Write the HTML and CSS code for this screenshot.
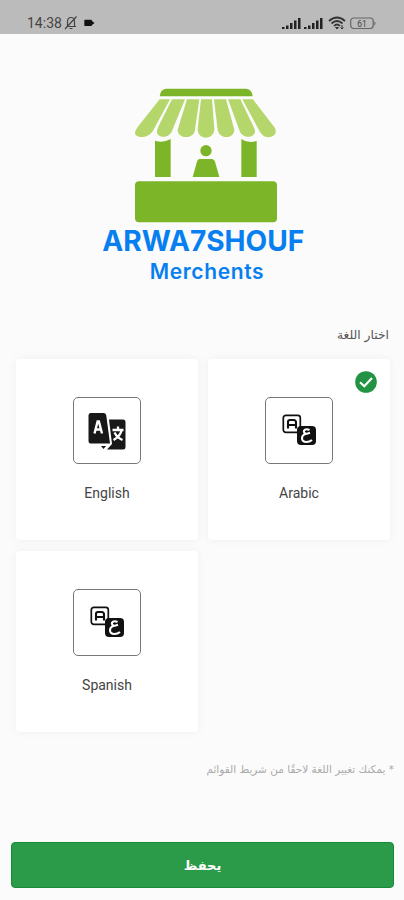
FILE: index.html
```html
<!DOCTYPE html>
<html lang="ar">
<head>
<meta charset="utf-8">
<title>Arwa7shouf Merchents</title>
<link rel="stylesheet" href="styles.css">
</head>
<body>
<svg class="defs" width="0" height="0">
  <symbol id="arabic" viewBox="0 0 36 36">
    <rect x="2.300" y="2.300" width="17" height="17" rx="2.500" fill="#fff" stroke="#111" stroke-width="1.700"/>
    <path d="M7 15.500V9Q7 7 9 7H12.500Q15 7 15 9.500V15.500M7 12H15" fill="none" stroke="#111" stroke-width="2.100"/>
    <rect x="16" y="13" width="19" height="19" rx="4" fill="#111"/>
    <path d="M28.500 17C24.500 15 21.500 17.500 23.500 20C24.500 21.200 26.500 20.800 29 19.800M25.500 20.800C19.500 22 19.500 29 25.500 29Q28.500 29 31 27" fill="none" stroke="#fff" stroke-width="2.100"/>
  </symbol>
</svg>
<div class="screen">
  <header class="status">
    <div class="group">
      <span class="time">14:38</span>
      <svg class="bell" width="14" height="16" viewBox="0 0 14 16" fill="none" stroke="#444" stroke-width="1.200"><path d="M2.500 11.500H12M3.500 11V6.500Q3.500 2.500 7 2.500T10.500 6.500V11M5.500 13.500H8.500M1 14L12.500 1.500"/></svg>
      <svg class="cam" width="11" height="8" viewBox="0 0 11 8"><path d="M1 .8H7Q8 .8 8 2L10.500 4L8 6Q8 7 7 7H1Q.3 7 .3 6V2Q.3 .8 1 .8Z" fill="#111"/></svg>
    </div>
    <div class="group signals">
      <svg width="19" height="13" viewBox="0 0 19 13" fill="#222"><path d="M0 10h2.500v2H0zM4 8.500h2.500V12H4zM8 6h2.500v6H8zM12 3.500h2.500V12H12zM16 1h2.500v11H16z"/></svg>
      <svg width="19" height="13" viewBox="0 0 19 13" fill="#222"><path d="M0 10h2.500v2H0zM4 8.500h2.500V12H4zM8 6h2.500v6H8zM12 3.500h2.500V12H12zM16 1h2.500v11H16z"/></svg>
      <svg class="wifi" width="18" height="14" viewBox="0 0 18 14" fill="none" stroke="#333" stroke-width="1.700"><path d="M1 5Q9-2 17 5M3.500 7.500Q9 2.500 14.500 7.500M6 10Q9 7 12 10"/><path d="M7.500 11.500L9 13L10.500 11.500ZM14 9V13M12.500 11.500L14 13L15.500 11.500" stroke-width="1"/></svg>
      <svg width="27" height="13" viewBox="0 0 27 13"><rect x=".7" y="1" width="22.500" height="10.500" rx="3" fill="none" stroke="#666" stroke-width="1.200"/><path d="M24.500 4Q26.500 6.300 24.500 8.500Z" fill="#555"/><text x="12" y="9.600" text-anchor="middle" class="battery">61</text></svg>
    </div>
  </header>
  <svg class="logo" width="230" height="220" viewBox="0 0 690 660">
    <path d="M228 41H469Q486 43 488 64H209Q211 43 228 41Z" fill="#7cb527"/>
    <g fill="#b4d66b">
      <path d="M209 73H240L189 167C176 190 137 192 135 175Q135 166 146 152Z"/>
      <path d="M246 73H285L246 168C236 192 203 189 201 172Q200 166 206 153Z"/>
      <path d="M291 73H328L315 164C312 194 263 193 263 164Z"/>
      <path d="M333 73H366L373 162C372 196 323 197 323 162Z"/>
      <path d="M372 73H408L433 164C432 193 388 194 383 164Z"/>
      <path d="M414 73H451L492 158C507 188 459 196 449 168Z"/>
      <path d="M457 73H489L551 154C574 182 528 202 510 171Z"/>
    </g>
    <g fill="#7cb527">
      <path d="M195 197Q219 205 242 192V306H195ZM454 192Q473 206 500 198V306H454Z"/>
      <circle cx="348" cy="227" r="17"/>
      <path d="M329 252H365Q373 252 376 263L388 306H308L320 263Q323 252 329 252Z"/>
      <rect x="135" y="319" width="426" height="123" rx="12"/>
    </g>
    <text class="brand" x="37" y="528" textLength="606" lengthAdjust="spacingAndGlyphs">ARWA7SHOUF</text>
    <text class="sub" x="179" y="613" textLength="342" lengthAdjust="spacing">Merchents</text>
  </svg>
  <h1 class="title" dir="rtl">اختار اللغة</h1>
  <main class="grid">
    <div class="card">
      <div class="tile"><svg class="translate" width="40" height="40" viewBox="0 0 40 40">
        <path d="M4.500 2H17.500Q19.700 2 20.200 4L24 32.500H4.500Q2.500 32.500 2.500 30V4.500Q2.500 2 4.500 2Z" fill="#181818"/>
        <path d="M23 8.500H37Q39.500 8.500 39.500 11V36Q39.500 38.500 37 38.500H21L26 33Z" fill="#181818"/>
        <path d="M15 35H20L17.500 38Z" fill="#181818"/>
        <path d="M8.500 22.500L11.600 10.500H12.900L16 22.500M9.800 18.500H14.800" fill="none" stroke="#fff" stroke-width="2.400"/>
        <path d="M26.500 19H37.500M32 15.500V19M28.500 21.500Q31 26.500 36.500 29M35.500 19.500Q34 25.500 27.500 29" fill="none" stroke="#fff" stroke-width="2.300"/>
      </svg></div>
      <span class="name">English</span>
    </div>
    <div class="card">
      <svg class="check" width="22" height="22" viewBox="0 0 22 22"><circle cx="11" cy="11" r="10.800" fill="#229342"/><path d="M5 11.200L9.300 15.300L17 7" fill="none" stroke="#fff" stroke-width="2.200"/></svg>
      <div class="tile"><svg width="36" height="36"><use href="#arabic"/></svg></div>
      <span class="name">Arabic</span>
    </div>
    <div class="card">
      <div class="tile"><svg width="36" height="36"><use href="#arabic"/></svg></div>
      <span class="name">Spanish</span>
    </div>
  </main>
  <p class="note" dir="rtl">* يمكنك تغيير اللغة لاحقًا من شريط القوائم</p>
  <button class="save">يحفظ</button>
</div>
</body>
</html>
```
FILE: styles.css
```css
* { box-sizing: border-box; }
body { margin: 0; background: #fbfbfb; font-family: Roboto, "DejaVu Sans", sans-serif; }
.defs { display: block; height: 0; }
.screen { height: 900px; display: flex; flex-direction: column; overflow: hidden; }
.status { height: 34px; flex: none; background: #bbb; padding: 11px 27px 0 27px; display: flex; justify-content: space-between; }
.group { display: flex; align-items: center; height: 24px; }
.time { font-size: 14px; color: #444; width: 37px; }
.cam { margin-left: 6px; }
.signals { gap: 3px; }
.signals .wifi { margin: 0 1px 0 2px; }
.battery { font: 8.500px Roboto, sans-serif; fill: #444; }
.logo { flex: none; margin: 41px 0 0 90px; }
.brand { font: 700 86px Inter, sans-serif; fill: #087ff0; }
.sub { font: 600 63px Inter, sans-serif; fill: #087ff0; }
.title { margin: 30px 15px 0; height: 34px; font: 400 12.300px/20px "DejaVu Sans", sans-serif; color: #555; }
.grid { display: grid; grid-template-columns: 182px 182px; grid-auto-rows: 181px; gap: 11px 10px; padding: 0 16px; }
.card { position: relative; background: #fff; border-radius: 4px; box-shadow: 0 0 10px rgba(0, 0, 0, .05); display: flex; flex-direction: column; align-items: center; padding-top: 38px; }
.tile { width: 68px; height: 67px; border: 1px solid #777; border-radius: 5px; display: flex; align-items: center; justify-content: center; }
.translate { margin-right: 2px; }
.name { margin-top: 19px; font-size: 14px; line-height: 20px; color: #444; }
.check { position: absolute; top: 12px; right: 13px; }
.note { margin: 27px 10px 0; height: 20px; font: 10.500px/20px "DejaVu Sans", sans-serif; color: #aaa; white-space: nowrap; }
.save { margin: auto 10px 12px 11px; height: 46px; flex: none; border: 1px solid #168b37; border-radius: 4px; background: #2b9a49; color: #fff; font: 700 13px "DejaVu Sans", sans-serif; }
```
